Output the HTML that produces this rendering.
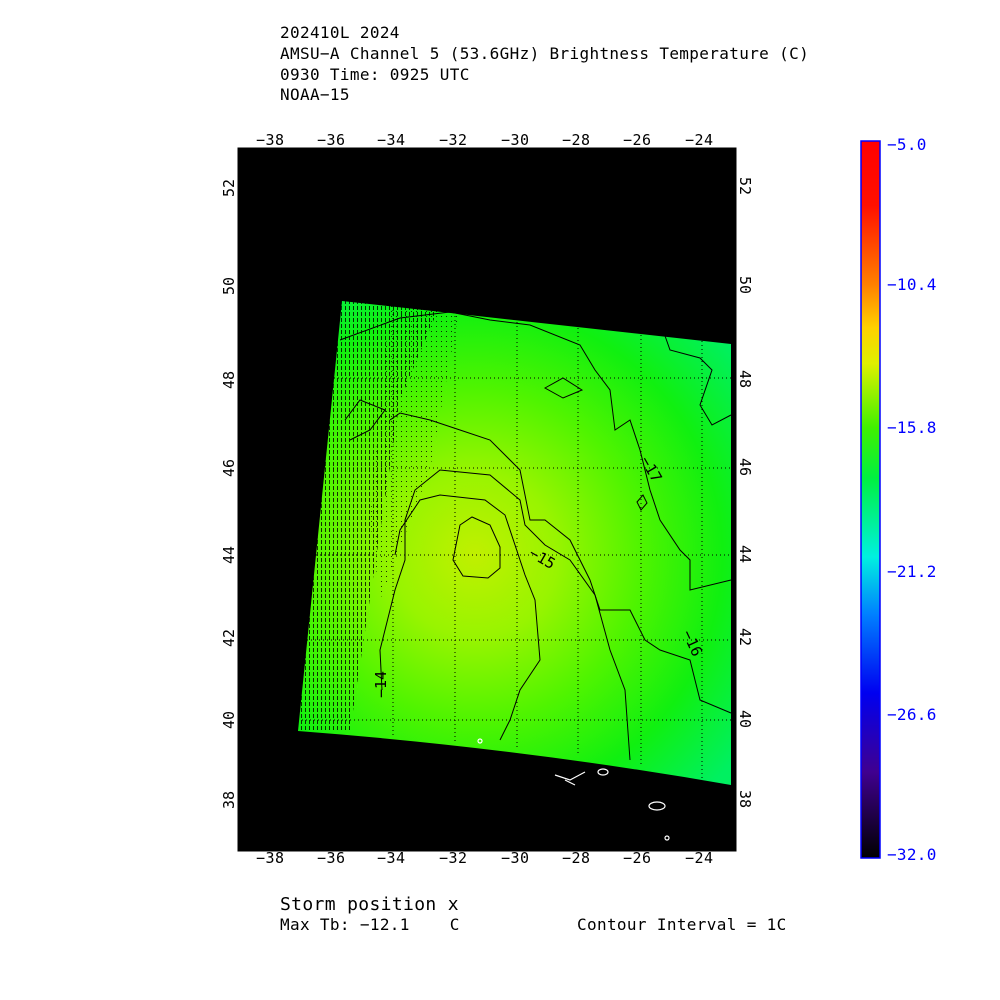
<!DOCTYPE html>
<html><head><meta charset="utf-8"><style>
html,body{margin:0;padding:0;background:#fff;width:1000px;height:1000px;overflow:hidden}
svg{display:block}
text{font-family:"DejaVu Sans Mono","Liberation Mono",monospace;white-space:pre}
</style></head><body>
<svg width="1000" height="1000" viewBox="0 0 1000 1000" xmlns="http://www.w3.org/2000/svg">
<defs>
<radialGradient id="sw" cx="475" cy="555" r="330" gradientUnits="userSpaceOnUse">
<stop offset="0" stop-color="#c0f000"/>
<stop offset="0.25" stop-color="#98f400"/>
<stop offset="0.5" stop-color="#50f400"/>
<stop offset="0.75" stop-color="#10f010"/>
<stop offset="1" stop-color="#00f060"/>
</radialGradient>
<linearGradient id="cb" x1="0" y1="0" x2="0" y2="1">
<stop offset="0" stop-color="#ff0000"/>
<stop offset="0.09" stop-color="#ff1000"/>
<stop offset="0.2" stop-color="#ff8000"/>
<stop offset="0.26" stop-color="#ffd000"/>
<stop offset="0.31" stop-color="#e0f000"/>
<stop offset="0.4" stop-color="#40f000"/>
<stop offset="0.47" stop-color="#00f040"/>
<stop offset="0.58" stop-color="#00f0e0"/>
<stop offset="0.66" stop-color="#0080ff"/>
<stop offset="0.77" stop-color="#0000f0"/>
<stop offset="0.88" stop-color="#400090"/>
<stop offset="1" stop-color="#000000"/>
</linearGradient>
<pattern id="hatch" width="4" height="6" patternUnits="userSpaceOnUse">
<rect x="1" y="0" width="1" height="4" fill="#000"/>
</pattern>
<pattern id="dots" width="5" height="5" patternUnits="userSpaceOnUse">
<rect x="1" y="1" width="1" height="1" fill="#000"/>
</pattern>
</defs>
<g fill="#000" font-size="16" letter-spacing="0.35">
<text x="280" y="38">202410L 2024</text>
<text x="280" y="59">AMSU−A Channel 5 (53.6GHz) Brightness Temperature (C)</text>
<text x="280" y="80">0930 Time: 0925 UTC</text>
<text x="280" y="100">NOAA−15</text>
<text x="280" y="910" font-size="18">Storm position x</text>
<text x="280" y="930">Max Tb: −12.1    C</text>
<text x="577" y="930">Contour Interval = 1C</text>
</g>
<rect x="237" y="147" width="500" height="705" fill="#000"/>
<rect x="236.5" y="146.5" width="501" height="706" fill="none" stroke="#fff" stroke-width="2"/>
<path d="M342 301 L731 344 L731 785 Q520 748 298 731 Z" fill="url(#sw)"/>
<path d="M342 301 L440 305 L400 400 L350 731 L298 731 Z" fill="url(#hatch)" opacity="0.8"/>
<path d="M390 303 L460 306 L430 470 L380 600 L370 520 Z" fill="url(#dots)" opacity="0.8"/>
<g stroke="#000" stroke-width="1" stroke-dasharray="1 3" fill="none">
<path d="M393 302V735M455 308V741M517 314V747M578 320V756M641 327V766M702 333V778"/>
<path d="M318 378H731M313 468H731M308 555H731M303 640H731M298 720H731"/>
</g>
<g stroke="#000" stroke-width="1" fill="none">
<path d="M453 560 L460 525 L472 517 L490 525 L500 547 L500 568 L488 578 L463 576 Z"/>
<path d="M395 555 L400 530 L420 500 L440 495 L485 500 L505 515 L515 545 L525 575 L535 600 L540 660 L520 690 L510 720 L500 740"/>
<path d="M382 690 L380 650 L395 590 L405 560 L405 520 L415 490 L440 470 L490 475 L520 500 L525 525 L545 545 L570 560 L595 595 L610 650 L625 690 L630 760"/>
<path d="M390 420 L400 413 L430 420 L460 430 L490 440 L520 470 L530 520 L545 520 L570 540 L590 580 L600 610 L630 610 L645 640 L660 650 L690 660 L700 700 L731 713"/>
<path d="M340 340 L400 318 L450 312 L490 320 L530 325 L580 345 L595 370 L610 390 L615 430 L630 420 L640 450 L650 490 L660 520 L680 550 L690 560 L690 590 L731 580"/>
<path d="M545 388 L563 378 L582 390 L563 398 Z"/>
<path d="M637 502 L643 495 L647 503 L641 510 Z"/>
<path d="M664 333 L670 350 L700 358 L712 370 L700 405 L712 425 L731 415"/>
<path d="M345 420 L360 400 L385 410 L370 430 L350 440"/>
</g>
<g fill="#000" font-size="15">
<text x="528" y="556" transform="rotate(30 528 556)">−15</text>
<text x="640" y="460" transform="rotate(60 640 460)">−17</text>
<text x="682" y="633" transform="rotate(65 682 633)">−16</text>
<text x="386" y="698" transform="rotate(-90 386 698)">−14</text>
</g>
<g stroke="#fff" stroke-width="1.2" fill="none">
<ellipse cx="603" cy="772" rx="5" ry="3"/>
<path d="M555 775 L570 780 L585 772 M565 780 L575 785"/>
<ellipse cx="657" cy="806" rx="8" ry="4"/>
<circle cx="480" cy="741" r="2"/>
<circle cx="667" cy="838" r="2"/>
</g>
<g fill="#000" font-size="15" letter-spacing="0.5">
<text x="256" y="145">−38</text><text x="317" y="145">−36</text><text x="377" y="145">−34</text>
<text x="439" y="145">−32</text><text x="501" y="145">−30</text><text x="562" y="145">−28</text>
<text x="623" y="145">−26</text><text x="685" y="145">−24</text>
<text x="256" y="863">−38</text><text x="317" y="863">−36</text><text x="377" y="863">−34</text>
<text x="439" y="863">−32</text><text x="501" y="863">−30</text><text x="562" y="863">−28</text>
<text x="623" y="863">−26</text><text x="685" y="863">−24</text>
</g>
<g fill="#000" font-size="15">
<text transform="translate(234 197) rotate(-90)">52</text>
<text transform="translate(234 295) rotate(-90)">50</text>
<text transform="translate(234 389) rotate(-90)">48</text>
<text transform="translate(234 477) rotate(-90)">46</text>
<text transform="translate(234 564) rotate(-90)">44</text>
<text transform="translate(234 647) rotate(-90)">42</text>
<text transform="translate(234 729) rotate(-90)">40</text>
<text transform="translate(234 809) rotate(-90)">38</text>
<text transform="translate(740 177) rotate(90)">52</text>
<text transform="translate(740 276) rotate(90)">50</text>
<text transform="translate(740 370) rotate(90)">48</text>
<text transform="translate(740 458) rotate(90)">46</text>
<text transform="translate(740 545) rotate(90)">44</text>
<text transform="translate(740 628) rotate(90)">42</text>
<text transform="translate(740 710) rotate(90)">40</text>
<text transform="translate(740 790) rotate(90)">38</text>
</g>
<rect x="861" y="141" width="19" height="717" fill="url(#cb)" stroke="#0000ff" stroke-width="1.5"/>
<g fill="#0000ff" font-size="16" letter-spacing="0.3">
<text x="887" y="150">−5.0</text>
<text x="887" y="290">−10.4</text>
<text x="887" y="433">−15.8</text>
<text x="887" y="577">−21.2</text>
<text x="887" y="720">−26.6</text>
<text x="887" y="860">−32.0</text>
</g>
</svg>
</body></html>
